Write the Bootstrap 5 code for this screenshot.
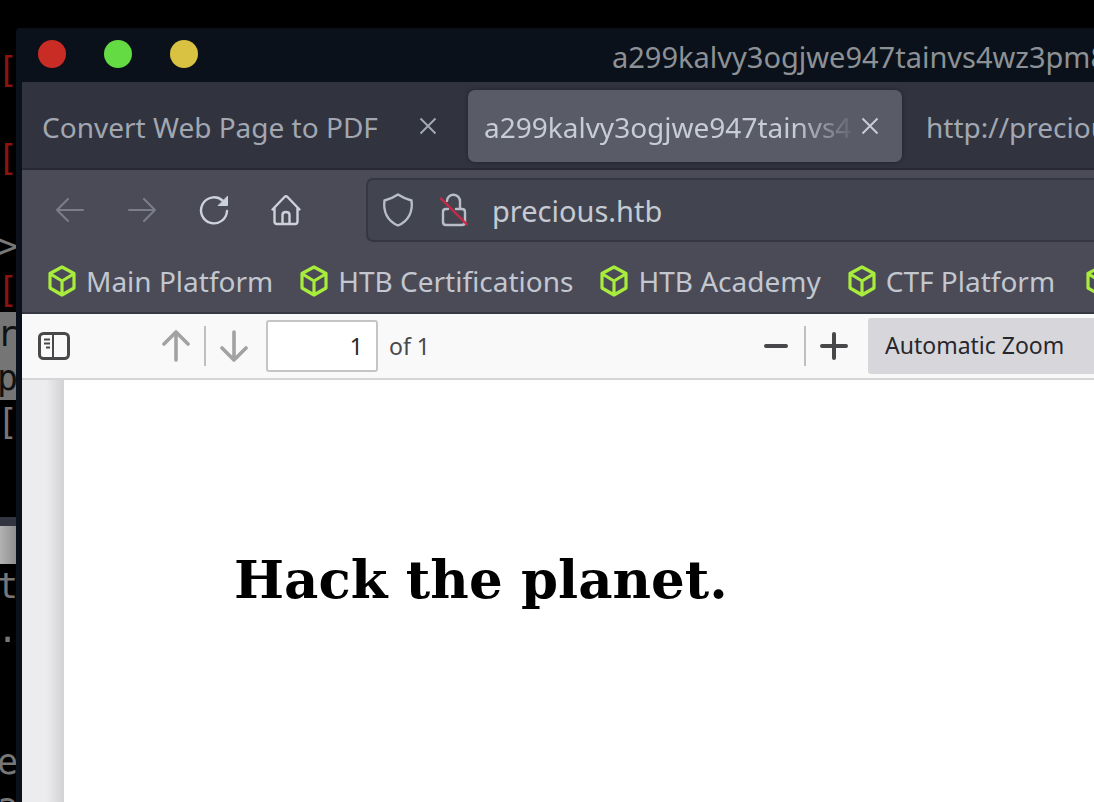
<!DOCTYPE html>
<html lang="en">
<head>
<meta charset="utf-8">
<meta name="viewport" content="width=device-width, initial-scale=1">
<title>precious.htb</title>
<link href="https://cdn.jsdelivr.net/npm/bootstrap@5.3.0/dist/css/bootstrap.min.css" rel="stylesheet">
<style>
  body { background: #000; font-family: "Noto Sans", sans-serif; font-size: 28px; line-height: 40px; }
  svg { display: block; fill: none; stroke: currentColor; }
  button, .bookmark { color: inherit; }
  .plain { background: none; border: 0; padding: 0; }

  .terminal { width: 16px; padding-top: 48px; font: 35px/44px "DejaVu Sans Mono", monospace; color: #777; }
  .terminal .row-line { display: flex; justify-content: flex-end; height: 44px; margin-right: -2px; }
  .terminal .alert-mark { color: #8c140c; }
  .terminal .selected { background: #757575; color: #111; }
  .terminal .pane-gap { height: 73px; }
  .terminal .pane-bar { height: 9px; background: #32343f; }
  .terminal .pane-tab { height: 38px; background: linear-gradient(90deg, #b2b2b2, #8f8f8f); }

  .browser { margin-top: 28px; border-left: 6px solid #0a111b; border-top-left-radius: 4px; background: #0a111b; }
  .titlebar { height: 54px; padding: 0 0 2px 16px; color: #8d9195; font-size: 29px; }
  .window-buttons { gap: 38px; }
  .dot { width: 28px; height: 28px; border-radius: 50%; }
  .dot-red { background: #c92c24; }
  .dot-green { background: #64db43; }
  .dot-yellow { background: #d9c142; }
  .titlebar .caption { padding-left: 414px; padding-top: 6px; }

  .tabs { height: 88px; gap: 8px; padding: 8px 4px; background: #31343f; border-bottom: 2px solid #262934; color: #a2a7b1; }
  .page-tab { width: 434px; height: 72px; padding: 0 16px; border-radius: 7px; }
  .page-tab.current { background: #595b66; color: #c8ccd6; box-shadow: 0 0 4px #20232d; }
  .page-tab .label { width: 370px; text-align: left; overflow: hidden; padding-top: 2px; }
  .page-tab.current .label { -webkit-mask-image: linear-gradient(90deg, #000 310px, transparent 374px); mask-image: linear-gradient(90deg, #000 310px, transparent 374px); }
  .page-tab .close-tab { width: 32px; height: 32px; }

  .navigation { height: 80px; padding-left: 12px; background: #4a4b57; color: #cdd1da; }
  .nav-tool { width: 72px; height: 64px; }
  .nav-tool:disabled { color: #7b7d88; }
  .address { height: 64px; margin-left: 44px; padding-left: 14px; background: #424550; border: 2px solid #343742; border-right: 0; border-radius: 7px 0 0 7px; gap: 24px; color: #b9bdc6; }
  .address input { background: none; border: 0; padding: 0; color: #c6cad3; outline: 0; height: 44px; font-size: 29px; }

  .bookmarks { height: 64px; padding: 0 0 0 26px; gap: 27px; background: #4a4b57; border-bottom: 2px solid #363843; color: #c3c7d0; }
  .bookmark { gap: 10px; text-decoration: none; }
  .bookmark svg { color: #a8ec3c; }

  .pdf-bar { height: 66px; padding-left: 16px; background: #f9f9fa; border-bottom: 2px solid #d5d5d7; color: #48484a; font-size: 23px; }
  .paging { gap: 14px; margin-left: 92px; color: #a2a2a3; }
  .page-field { gap: 11px; margin-left: 18px; }
  .zooming { gap: 14px; }
  .divider { width: 2px; height: 40px; background: #bfbfc0; }
  .page-number { width: 112px; height: 52px; border: 2px solid #c5c5c6; border-radius: 3px; background: #fff; text-align: right; padding: 0 13px 0 0; color: #27272c; }
  .zoom-choice { width: 226px; height: 56px; margin-left: 6px; border: 0; border-radius: 3px 0 0 3px; background: #d7d7db; color: #27272c; padding: 0 0 2px 17px; appearance: none; }

  .viewer { background: linear-gradient(90deg, #ececee 24px, #d2d2d4 42px); padding-left: 42px; }
  .sheet { background: #fff; padding: 163px 16px 0 170px; }
  .sheet h1 { font: bold 53px/72px "DejaVu Serif", serif; color: #000; margin: 0; }
</style>
</head>
<body class="d-flex vh-100 overflow-hidden">
  <svg class="d-none">
    <symbol id="cube" viewBox="0 0 28 32"><path d="M14 2 26 8.500V23L14 30 2 23V8.500ZM2.500 9 14 16 25.500 9M14 16V29" stroke-width="3.200" stroke-linejoin="round"/></symbol>
    <symbol id="cross" viewBox="0 0 18 18"><path d="M1.500 1.500 16.500 16.500M16.500 1.500 1.500 16.500" stroke-width="2"/></symbol>
  </svg>

  <aside class="terminal flex-shrink-0 overflow-hidden" aria-label="Terminal">
    <div class="row-line alert-mark">[</div>
    <div class="row-line"></div>
    <div class="row-line alert-mark">[</div>
    <div class="row-line"></div>
    <div class="row-line">&gt;</div>
    <div class="row-line alert-mark">[</div>
    <div class="row-line selected">r</div>
    <div class="row-line selected">p</div>
    <div class="row-line">[</div>
    <div class="pane-gap"></div>
    <div class="pane-bar"></div>
    <div class="pane-tab"></div>
    <div class="row-line">t</div>
    <div class="row-line">.</div>
    <div class="row-line"></div>
    <div class="row-line"></div>
    <div class="row-line">e</div>
    <div class="row-line">a</div>
  </aside>

  <div class="browser d-flex flex-column flex-grow-1 overflow-hidden">
    <header class="titlebar d-flex align-items-center flex-shrink-0 text-nowrap overflow-hidden">
      <div class="window-buttons d-flex flex-shrink-0">
        <button class="plain dot dot-red" aria-label="Close"></button>
        <button class="plain dot dot-green" aria-label="Maximize"></button>
        <button class="plain dot dot-yellow" aria-label="Minimize"></button>
      </div>
      <div class="caption">a299kalvy3ogjwe947tainvs4wz3pm8</div>
    </header>

    <div class="tabs d-flex flex-shrink-0 text-nowrap overflow-hidden">
      <div class="page-tab d-flex align-items-center flex-shrink-0">
        <button class="plain label">Convert Web Page to PDF</button>
        <button class="plain close-tab d-flex align-items-center justify-content-center" aria-label="Close tab"><svg width="18" height="18"><use href="#cross"/></svg></button>
      </div>
      <div class="page-tab current d-flex align-items-center flex-shrink-0">
        <button class="plain label">a299kalvy3ogjwe947tainvs4</button>
        <button class="plain close-tab d-flex align-items-center justify-content-center" aria-label="Close tab"><svg width="18" height="18"><use href="#cross"/></svg></button>
      </div>
      <div class="page-tab d-flex align-items-center flex-shrink-0">
        <button class="plain label">http://precious.htb</button>
      </div>
    </div>

    <nav class="navigation d-flex align-items-center flex-shrink-0">
      <button class="plain nav-tool d-flex align-items-center justify-content-center" disabled aria-label="Back">
        <svg width="28" height="24" viewBox="0 0 28 24" stroke-width="2" stroke-linecap="round" stroke-linejoin="round"><path d="M27 12H1M12 1 1 12 12 23"/></svg>
      </button>
      <button class="plain nav-tool d-flex align-items-center justify-content-center" disabled aria-label="Forward">
        <svg width="28" height="24" viewBox="0 0 28 24" stroke-width="2" stroke-linecap="round" stroke-linejoin="round"><path d="M1 12H27M16 1 27 12 16 23"/></svg>
      </button>
      <button class="plain nav-tool d-flex align-items-center justify-content-center" aria-label="Reload">
        <svg width="30" height="30" viewBox="0 0 30 30" stroke-width="2.400" stroke-linecap="round"><path d="M23.500 5.500A13 13 0 1 0 28 16"/><path d="M28.500 1.500V10.500H19.500Z" fill="currentColor" stroke-width="1" stroke-linejoin="round"/></svg>
      </button>
      <button class="plain nav-tool d-flex align-items-center justify-content-center" aria-label="Home">
        <svg width="30" height="32" viewBox="0 0 30 32" stroke-width="2.400" stroke-linecap="round" stroke-linejoin="round"><path d="M1.500 15.500 13.500 3Q15 1.500 16.500 3L28.500 15.500M3.500 14V27.500Q3.500 30 6 30H24Q26.500 30 26.500 27.500V14M11.500 30V21Q11.500 18 15 18T18.500 21V30"/></svg>
      </button>
      <div class="address d-flex align-items-center flex-grow-1">
        <svg width="32" height="34" viewBox="0 0 32 34" stroke-width="2.400" stroke-linejoin="round"><path d="M16 1.500Q22 5.500 29.500 7.500C31 18 27 28 16 32.500 5 28 1 18 2.500 7.500Q10 5.500 16 1.500Z"/></svg>
        <svg width="30" height="34" viewBox="0 0 30 34" stroke-width="2.400" stroke-linecap="round"><path d="M9 8A6.500 6.500 0 0 1 22 8.500V16M10 16H8Q5 16 5 19V29Q5 32 8 32H24Q27 32 27 29V19Q27 16 24 16H18"/><path d="M3 5.500 29 31.500" stroke="#cb2848"/></svg>
        <input class="flex-grow-1" type="text" value="precious.htb" aria-label="Address">
      </div>
    </nav>

    <nav class="bookmarks d-flex align-items-center flex-shrink-0 text-nowrap overflow-hidden" aria-label="Bookmarks">
      <a class="bookmark d-flex align-items-center" href="#"><svg width="28" height="32"><use href="#cube"/></svg>Main Platform</a>
      <a class="bookmark d-flex align-items-center" href="#"><svg width="28" height="32"><use href="#cube"/></svg>HTB Certifications</a>
      <a class="bookmark d-flex align-items-center" href="#"><svg width="28" height="32"><use href="#cube"/></svg>HTB Academy</a>
      <a class="bookmark d-flex align-items-center" href="#"><svg width="28" height="32"><use href="#cube"/></svg>CTF Platform</a>
      <a class="bookmark d-flex align-items-center ms-1" href="#" aria-label="More"><svg width="28" height="32"><use href="#cube"/></svg></a>
    </nav>

    <div class="pdf-bar d-flex align-items-center flex-shrink-0">
      <button class="plain" aria-label="Toggle sidebar">
        <svg width="32" height="28" viewBox="0 0 32 28" stroke-width="3"><rect x="1.500" y="1.500" width="29" height="25" rx="4"/><path d="M15 2V26M6 7.500H12M6 11.500H12M8 15.500H12" stroke-width="2"/></svg>
      </button>
      <div class="paging d-flex align-items-center">
        <button class="plain" aria-label="Previous page"><svg width="28" height="32" viewBox="0 0 28 32" stroke-width="3.600" stroke-linecap="round" stroke-linejoin="round"><path d="M14 30V2M2 14 14 2 26 14"/></svg></button>
        <div class="divider"></div>
        <button class="plain" aria-label="Next page"><svg width="28" height="32" viewBox="0 0 28 32" stroke-width="3.600" stroke-linecap="round" stroke-linejoin="round"><path d="M14 2V30M2 18 14 30 26 18"/></svg></button>
      </div>
      <label class="page-field d-flex align-items-center"><input class="page-number" type="text" value="1" aria-label="Page"><span>of 1</span></label>
      <div class="zooming d-flex align-items-center ms-auto">
        <button class="plain" aria-label="Zoom out"><svg width="28" height="28" viewBox="0 0 28 28" stroke-width="4" stroke-linecap="round"><path d="M4 14H24"/></svg></button>
        <div class="divider"></div>
        <button class="plain" aria-label="Zoom in"><svg width="28" height="28" viewBox="0 0 28 28" stroke-width="4" stroke-linecap="round"><path d="M2 14H26M14 2V26"/></svg></button>
        <select class="zoom-choice" aria-label="Zoom"><option>Automatic Zoom</option></select>
      </div>
    </div>

    <main class="viewer d-flex flex-grow-1">
      <article class="sheet flex-grow-1"><h1>Hack the planet.</h1></article>
    </main>
  </div>
<script src="https://cdn.jsdelivr.net/npm/bootstrap@5.3.0/dist/js/bootstrap.bundle.min.js"></script>
</body>
</html>
